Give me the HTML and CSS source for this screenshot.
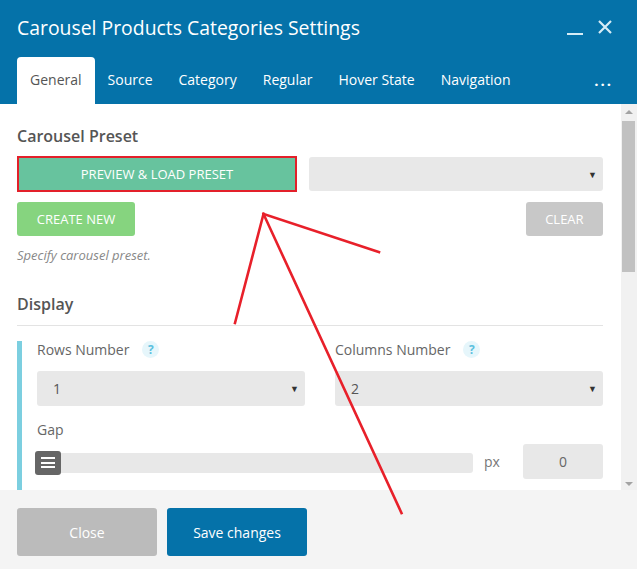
FILE: index.html
```html
<!DOCTYPE html>
<html lang="en">
<head>
    <meta charset="UTF-8">
    <title>Carousel Products Categories Settings</title>
    <link rel="stylesheet" href="styles.css">
</head>
<body>
    <div class="modal">
        <header class="modal-header">
            <div class="title-row">
                <h1>Carousel Products Categories Settings</h1>
                <div class="window-controls">
                    <span class="minimize"></span>
                    <svg class="close-icon" width="16" height="16" viewBox="0 0 16 16">
                        <path d="M2 2 L14 14 M14 2 L2 14" stroke="#d6ecf6" stroke-width="2.2" fill="none"/>
                    </svg>
                </div>
            </div>
            <nav class="tabs">
                <span class="tab active">General</span>
                <span class="tab">Source</span>
                <span class="tab">Category</span>
                <span class="tab">Regular</span>
                <span class="tab">Hover State</span>
                <span class="tab">Navigation</span>
                <span class="tab-more">...</span>
            </nav>
        </header>

        <div class="modal-body">
            <div class="content">
                <h2>Carousel Preset</h2>
                <div class="preset-row">
                    <button class="btn-preview">PREVIEW &amp; LOAD PRESET</button>
                    <div class="select"><span></span><i class="caret">▼</i></div>
                </div>
                <div class="preset-actions">
                    <button class="btn-create">CREATE NEW</button>
                    <button class="btn-clear">CLEAR</button>
                </div>
                <p class="hint">Specify carousel preset.</p>

                <h2 class="section-title">Display</h2>
                <div class="group">
                    <div class="field-grid">
                        <div class="field">
                            <label>Rows Number <span class="help">?</span></label>
                            <div class="select"><span>1</span><i class="caret">▼</i></div>
                        </div>
                        <div class="field">
                            <label>Columns Number <span class="help">?</span></label>
                            <div class="select"><span>2</span><i class="caret">▼</i></div>
                        </div>
                    </div>
                    <div class="field">
                        <label>Gap</label>
                        <div class="slider-row">
                            <div class="slider">
                                <span class="handle"><b></b><b></b><b></b></span>
                                <span class="track"></span>
                            </div>
                            <span class="unit">px</span>
                            <div class="num-input">0</div>
                        </div>
                    </div>
                </div>
            </div>
            <div class="scrollbar">
                <i class="arrow-up"></i>
                <div class="thumb"></div>
                <i class="arrow-down"></i>
            </div>
        </div>

        <footer class="modal-footer">
            <button class="btn-close">Close</button>
            <button class="btn-save">Save changes</button>
        </footer>

        <svg class="annotation" width="637" height="569" viewBox="0 0 637 569">
            <g stroke="#e8202a" stroke-width="2.6" fill="none" stroke-linecap="square">
                <line x1="263.5" y1="214" x2="379" y2="252"/>
                <line x1="263.5" y1="214" x2="235" y2="323"/>
                <line x1="263.5" y1="214" x2="401.5" y2="513"/>
            </g>
        </svg>
    </div>
</body>
</html>
```

FILE: styles.css
```css
body {
    margin: 0;
    font-family: "Open Sans", Arial, sans-serif;
    background: #fff;
}
.modal {
    position: relative;
    width: 637px;
    height: 569px;
    display: flex;
    flex-direction: column;
    overflow: hidden;
}
/* header */
.modal-header {
    background: #0572a9;
    color: #fff;
    height: 104px;
    box-sizing: border-box;
    padding: 0 24px 0 17px;
    display: flex;
    flex-direction: column;
}
.title-row {
    height: 57px;
    display: flex;
    align-items: center;
    justify-content: space-between;
    padding-bottom: 3px;
    box-sizing: border-box;
}
.title-row h1 {
    margin: 0;
    font-size: 19.4px;
    font-weight: 400;
    color: #fff;
}
.window-controls {
    display: flex;
    align-items: center;
    gap: 14px;
}
.minimize {
    width: 16px;
    height: 2px;
    background: #d6ecf6;
    margin-top: 13px;
}
.tabs {
    display: flex;
    align-items: stretch;
    height: 47px;
}
.tab {
    display: flex;
    align-items: center;
    padding: 0 13px 3px 13px;
    font-size: 14px;
    color: #fff;
}
.tab.active {
    background: #fff;
    color: #555;
    border-radius: 4px 4px 0 0;
}
.tab-more {
    margin-left: auto;
    font-size: 15px;
    letter-spacing: 2px;
    font-weight: 700;
    padding-bottom: 2px;
    display: flex;
    align-items: center;
}
/* body */
.modal-body {
    height: 386px;
    display: flex;
    overflow: hidden;
}
.content {
    flex: 1;
    padding: 21px 18px 0 17px;
    color: #555;
}
.content h2 {
    margin: 0;
    font-size: 16px;
    font-weight: 600;
    line-height: 22px;
    color: #555;
}
.preset-row {
    display: grid;
    grid-template-columns: 280px 1fr;
    gap: 12px;
    align-items: center;
    margin-top: 9px;
}
button {
    font-family: "Open Sans", Arial, sans-serif;
    border: none;
    color: #fff;
    cursor: pointer;
}
.btn-preview {
    height: 36px;
    background: #67c39e;
    border: 2px solid #e3202a;
    font-size: 13px;
}
.select {
    height: 34px;
    background: #e8e8e8;
    border-radius: 3px;
    display: flex;
    align-items: center;
    justify-content: space-between;
    padding: 0 6px 0 16px;
    font-size: 14px;
    color: #555;
}
.caret {
    font-style: normal;
    font-size: 9px;
    color: #333;
}
.preset-actions {
    display: flex;
    justify-content: space-between;
    margin-top: 10px;
}
.btn-create, .btn-clear {
    height: 34px;
    border-radius: 3px;
    font-size: 13px;
}
.btn-create {
    width: 118px;
    background: #86d47f;
}
.btn-clear {
    width: 77px;
    background: #c8c8c8;
}
.hint {
    margin: 10px 0 0;
    font-size: 13px;
    font-style: italic;
    line-height: 18px;
    color: #888;
}
.section-title {
    margin-top: 29px !important;
    padding-bottom: 10px;
    border-bottom: 1px solid #e3e3e3;
}
.group {
    margin-top: 15px;
    border-left: 5px solid #7ccfe0;
    padding: 0 0 30px 15px;
}
.field-grid {
    display: grid;
    grid-template-columns: 1fr 1fr;
    gap: 30px;
}
.field label {
    display: flex;
    align-items: center;
    height: 18px;
    font-size: 14px;
    color: #666;
    margin-top: -1px;
    margin-bottom: 13px;
}
.help {
    width: 17px;
    height: 17px;
    border-radius: 50%;
    background: #e6f6fb;
    color: #5bc0de;
    font-size: 12px;
    font-weight: 700;
    display: inline-flex;
    align-items: center;
    justify-content: center;
    margin-left: 13px;
}
.field-grid .select {
    height: 35px;
}
.group > .field {
    margin-top: 15px;
}
.group > .field label {
    margin-bottom: 6px;
}
.slider-row {
    display: flex;
    align-items: center;
    height: 35px;
}
.slider {
    flex: 0 0 438px;
    display: flex;
    align-items: center;
    margin-left: -2px;
    margin-top: 2px;
}
.handle {
    width: 26px;
    height: 24px;
    background: #666;
    border-radius: 3px;
    display: flex;
    flex-direction: column;
    align-items: center;
    justify-content: center;
    gap: 2.5px;
}
.handle b {
    width: 14px;
    height: 2px;
    background: #fff;
}
.track {
    flex: 1;
    height: 20px;
    background: #e8e8e8;
    border-radius: 0 3px 3px 0;
}
.unit {
    font-size: 14px;
    color: #777;
    margin-left: 11px;
    margin-right: 23px;
}
.num-input {
    width: 80px;
    height: 35px;
    background: #e8e8e8;
    border-radius: 3px;
    display: flex;
    align-items: center;
    justify-content: center;
    font-size: 14px;
    color: #666;
}
/* scrollbar */
.scrollbar {
    width: 17px;
    background: #f1f1f1;
    display: flex;
    flex-direction: column;
    align-items: center;
}
.arrow-up, .arrow-down {
    width: 0;
    height: 0;
    border-left: 4px solid transparent;
    border-right: 4px solid transparent;
}
.arrow-up {
    border-bottom: 4px solid #a3a3a3;
    margin: 6px 0 7px;
}
.arrow-down {
    border-top: 4px solid #a3a3a3;
    margin-top: auto;
    margin-bottom: 4px;
}
.thumb {
    width: 13px;
    height: 151px;
    background: #c1c1c1;
}
/* footer */
.modal-footer {
    flex: 1;
    background: #f4f4f4;
    display: flex;
    gap: 10px;
    padding: 18px 17px 0;
}
.btn-close, .btn-save {
    width: 140px;
    height: 48px;
    border-radius: 3px;
    font-size: 14px;
}
.btn-close {
    background: #bbbbbb;
}
.btn-save {
    background: #0572a9;
}
.annotation {
    position: absolute;
    left: 0;
    top: 0;
    pointer-events: none;
}
```
